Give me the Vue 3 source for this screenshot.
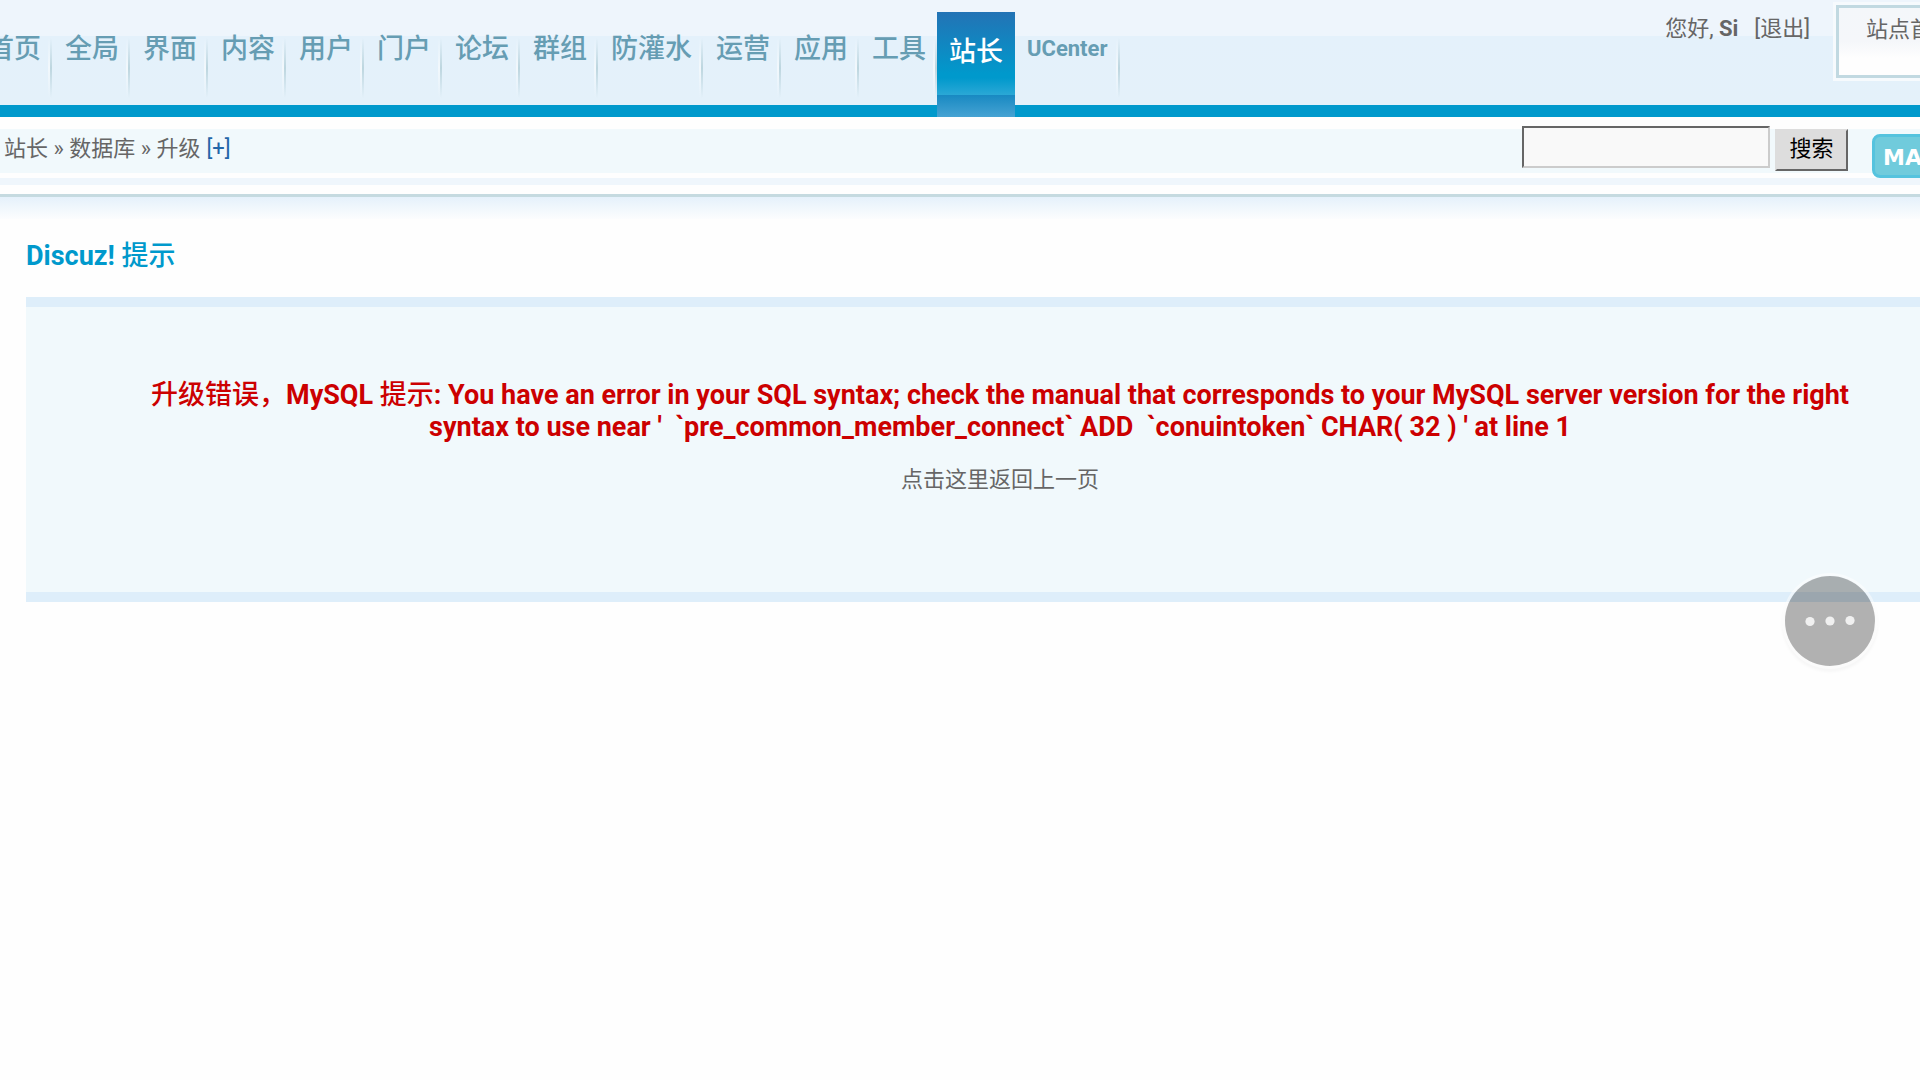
<script setup>
import { ref } from 'vue'

const menu = ['首页', '全局', '界面', '内容', '用户', '门户', '论坛', '群组', '防灌水', '运营', '应用', '工具', '站长', 'UCenter']
const active = ref('站长')
const keyword = ref('')
</script>

<template>
  <div class="viewport">
    <div class="sheet">
      <header class="header">
        <nav class="menu" aria-label="主菜单">
          <a
            v-for="item in menu"
            :key="item"
            href="#"
            :class="['tab', { current: item === active, small: item === 'UCenter' }]"
            @click.prevent="active = item"
          >{{ item }}</a>
        </nav>
        <div class="account">
          <p class="hello">您好, <b>Si</b><a class="logout" href="#">[退出]</a></p>
          <a class="site" href="#">站点首页</a>
        </div>
      </header>

      <div class="toolbar">
        <p class="crumbs">站长 » 数据库 » 升级<a class="add" href="#">[+]</a></p>
        <form class="search" @submit.prevent>
          <input v-model="keyword" class="field" type="text" aria-label="搜索">
          <button class="submit" type="submit">搜索</button>
          <a class="map" href="#">MAP</a>
        </form>
      </div>
      <div class="strip"></div>
      <div class="shade"></div>

      <main class="main">
        <h1 class="title">Discuz! <span class="han">提示</span></h1>
        <section class="notice">
          <h2 class="error"><span class="han">升级错误，</span>MySQL <span class="han">提示</span>: You have an error in your SQL syntax; check the manual that corresponds to your MySQL server version for the right syntax to use near '&nbsp; `pre_common_member_connect` ADD&nbsp; `conuintoken` CHAR( 32 ) ' at line 1</h2>
          <a class="back" href="#">点击这里返回上一页</a>
        </section>
      </main>
    </div>

    <button class="more" type="button" aria-label="更多">
      <svg viewBox="0 0 90 90" width="90" height="90" aria-hidden="true">
        <circle cx="25" cy="45.5" r="4.6" />
        <circle cx="45" cy="45" r="4.6" />
        <circle cx="65" cy="44.5" r="4.6" />
      </svg>
    </button>
  </div>
</template>

<style>
body {
  margin: 0;
  background: #fefefe;
}
</style>

<style scoped>
.viewport {
  position: relative;
  overflow: hidden;
  min-height: 100vh;
  font: 22px/32px Roboto, "Noto Sans CJK SC", sans-serif;
  color: #666;
}
.sheet {
  margin-right: -80px;
}
a {
  color: inherit;
  text-decoration: none;
}
p, h1, h2 {
  margin: 0;
}
.han {
  font-weight: 500;
}

.header {
  display: flex;
  justify-content: space-between;
  align-items: flex-start;
  height: 117px;
  box-sizing: border-box;
  background: linear-gradient(#eef5fc 36px, #e4f1fb 36px, #e4f1fa 105px, #09c 105px);
}
.menu {
  display: flex;
  margin-left: -26px;
  padding-top: 12px;
}
.tab {
  box-sizing: border-box;
  height: 105px;
  padding: 21px 11px 0 13px;
  font-size: 27px;
  font-weight: 500;
  color: #669db3;
  white-space: nowrap;
  background:
    linear-gradient(rgba(187, 210, 218, 0), #bdd6df 50%, rgba(187, 210, 218, 0)) right 26px / 2px 60px no-repeat,
    linear-gradient(rgba(255, 255, 255, 0), #f2f8fc 50%, rgba(255, 255, 255, 0)) right 2px top 26px / 2px 60px no-repeat;
}
.tab.small {
  padding: 21px 12px 0;
  font-size: 22px;
  font-weight: 700;
}
.tab.current {
  padding: 24px 12px 0;
  color: #fff;
  background: linear-gradient(#2373b5, #09c 62px, #09c 66px, #2ba8d6 83px, #1889c2 83px, #46a3d3);
}
.account {
  display: flex;
  padding: 5px 16px 0 0;
}
.hello {
  padding-top: 8px;
}
.hello b {
  font-weight: 700;
}
.logout {
  margin: 0 26px 0 16px;
}
.site {
  height: 61px;
  padding: 6px 27px 0;
  border: 3px solid #c1d9e1;
  box-shadow: 0 0 0 3px #f6fafd;
  background: linear-gradient(#f4f7fa, #f5f7fa 50%, #fefefe 75%);
}

.toolbar {
  display: flex;
  justify-content: space-between;
  align-items: flex-start;
  height: 44px;
  margin-top: 12px;
  padding: 0 38px 0 4px;
  background: #f1f9fc;
}
.crumbs {
  padding-top: 4px;
}
.add {
  margin-left: 6px;
  color: #2366a8;
}
.search {
  display: flex;
  align-items: flex-start;
}
.field {
  box-sizing: border-box;
  width: 248px;
  height: 42px;
  margin: -3px 5px 0 0;
  padding: 0 6px;
  border: 2px solid;
  border-color: #666 #ccc #ccc #666;
  font: inherit;
  background: #f9f9f9;
}
.submit {
  box-sizing: border-box;
  width: 73px;
  height: 42px;
  padding: 0 0 2px;
  border: 2px solid;
  border-color: #ddd #666 #666 #ddd;
  font: inherit;
  color: #000;
  background: #ddd;
}
.map {
  box-sizing: border-box;
  width: 90px;
  height: 44px;
  margin: 5px 0 0 24px;
  padding: 5px 8px;
  border: 3px solid #55c3de;
  border-radius: 8px;
  font-family: "DejaVu Sans", sans-serif;
  font-weight: 700;
  color: #fff;
  background: #70cbdc;
}
.strip {
  height: 7px;
  margin: 5px 0 9px;
  background: #eff6fc;
}
.shade {
  height: 22px;
  border-top: 3px solid #c5dae0;
  background: linear-gradient(#e5f1fb, #fcfdfe);
}

.main {
  padding: 21px 26px 0;
}
.title {
  margin-bottom: 25px;
  font-size: 27px;
  font-weight: 700;
  line-height: 32px;
  color: #09c;
}
.notice {
  padding: 72px 100px 96px;
  border: solid #deeefa;
  border-width: 10px 0;
  text-align: center;
  background: #f1f9fc;
}
.error {
  margin-bottom: 21px;
  font-size: 27px;
  font-weight: 700;
  line-height: 32px;
  color: #c00;
}
.back {
  display: block;
}

.more {
  position: absolute;
  top: 576px;
  right: 45px;
  width: 90px;
  height: 90px;
  padding: 0;
  border: 0;
  border-radius: 50%;
  background: rgba(0, 0, 0, 0.3);
  box-shadow: 0 0 0 3px rgba(255, 255, 255, 0.5), 0 3px 3px 3px rgba(0, 0, 0, 0.03);
}
.more svg {
  display: block;
  fill: #f0f0f0;
}
</style>
